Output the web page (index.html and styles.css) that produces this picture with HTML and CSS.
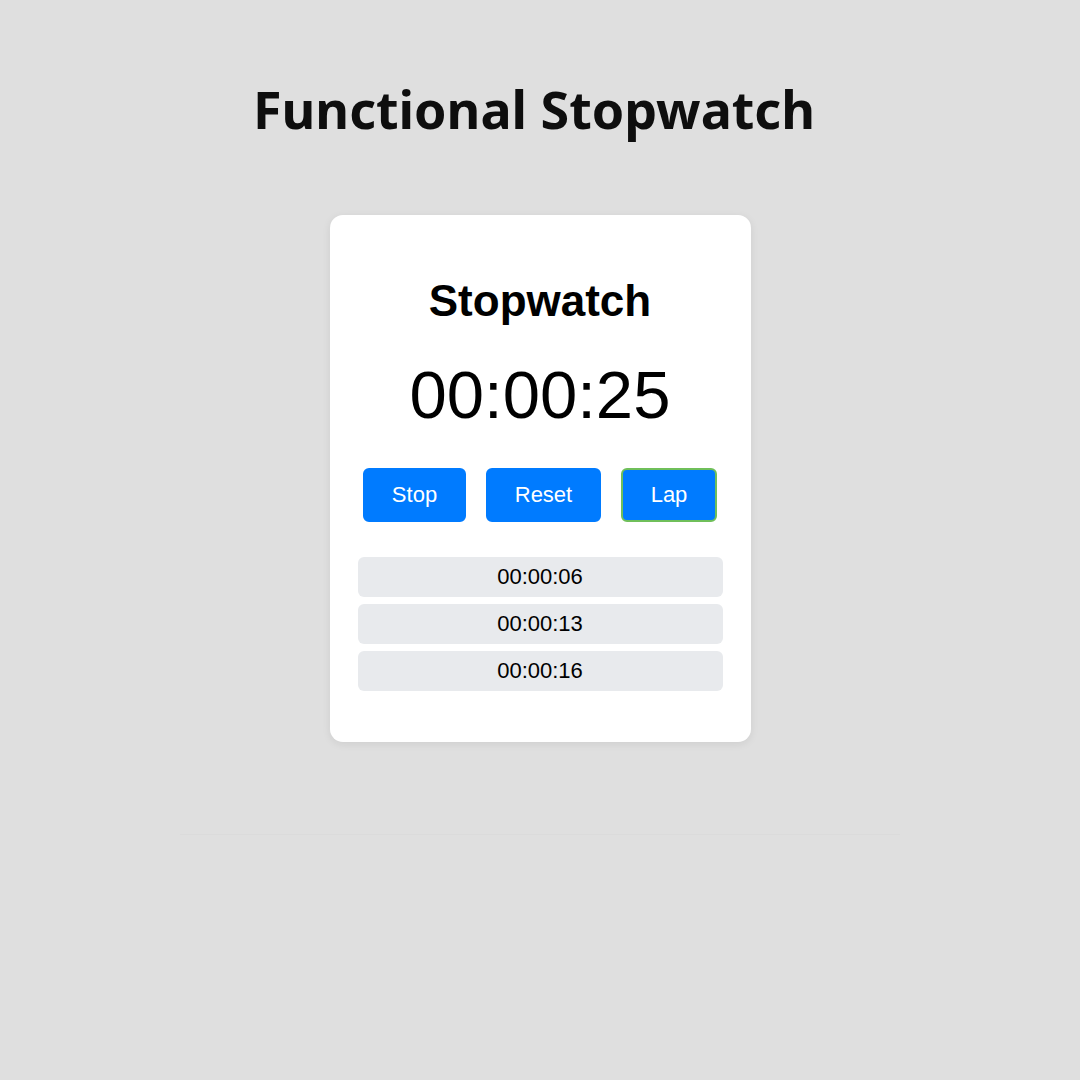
FILE: index.html
```html
<!DOCTYPE html>
<html lang="en">
<head>
<meta charset="utf-8">
<title>Functional Stopwatch</title>
<link rel="stylesheet" href="styles.css">
</head>
<body>
<main class="page">
  <h1 class="page-title">Functional Stopwatch</h1>
  <section class="card">
    <h2 class="card-title">Stopwatch</h2>
    <div class="display">00:00:25</div>
    <div class="controls">
      <button class="btn btn-stop">Stop</button>
      <button class="btn btn-reset">Reset</button>
      <button class="btn btn-lap">Lap</button>
    </div>
    <ul class="laps">
      <li class="lap">00:00:06</li>
      <li class="lap">00:00:13</li>
      <li class="lap">00:00:16</li>
    </ul>
  </section>
  <div class="divider"></div>
</main>
</body>
</html>
```

FILE: styles.css
```css
* { box-sizing: border-box; }
html, body { margin: 0; padding: 0; }
body {
  width: 1080px;
  height: 1080px;
  background: #dfdfdf;
  font-family: "Liberation Sans", Arial, sans-serif;
  color: #000;
}
.page {
  display: flex;
  flex-direction: column;
  align-items: center;
  padding-top: 74px;
}
.page-title {
  margin: 0 12px 0 0;
  font-family: "Noto Sans", "Open Sans", sans-serif;
  font-weight: 700;
  font-size: 52px;
  line-height: 70px;
  color: #0e0e0e;
}
.card {
  margin-top: 71px;
  width: 421px;
  background: #fff;
  border-radius: 13px;
  box-shadow: 0 2px 8px rgba(0,0,0,0.08);
  padding: 60px 28px 51px;
  display: flex;
  flex-direction: column;
  align-items: center;
}
.card-title {
  margin: 0;
  font-size: 44px;
  line-height: 52px;
  font-weight: 700;
}
.display {
  margin-top: 28px;
  font-size: 67px;
  line-height: 80px;
}
.controls {
  margin-top: 33px;
  display: flex;
  gap: 20px;
}
.btn {
  height: 54px;
  border: 2px solid #007bff;
  border-radius: 6px;
  background: #007bff;
  color: #fff;
  font-family: "Liberation Sans", Arial, sans-serif;
  font-size: 22px;
  padding: 0;
}
.btn-stop { width: 103px; }
.btn-reset { width: 115px; }
.btn-lap { width: 96px; border-color: #6fbf5a; }
.laps {
  list-style: none;
  margin: 35px 0 0;
  padding: 0;
  width: 100%;
  display: flex;
  flex-direction: column;
  gap: 7px;
}
.lap {
  height: 40px;
  background: #e8eaed;
  border-radius: 6px;
  font-size: 22px;
  display: flex;
  align-items: center;
  justify-content: center;
}
.divider {
  margin-top: 92px;
  width: 720px;
  height: 1px;
  background: #dbdbdb;
}
```
